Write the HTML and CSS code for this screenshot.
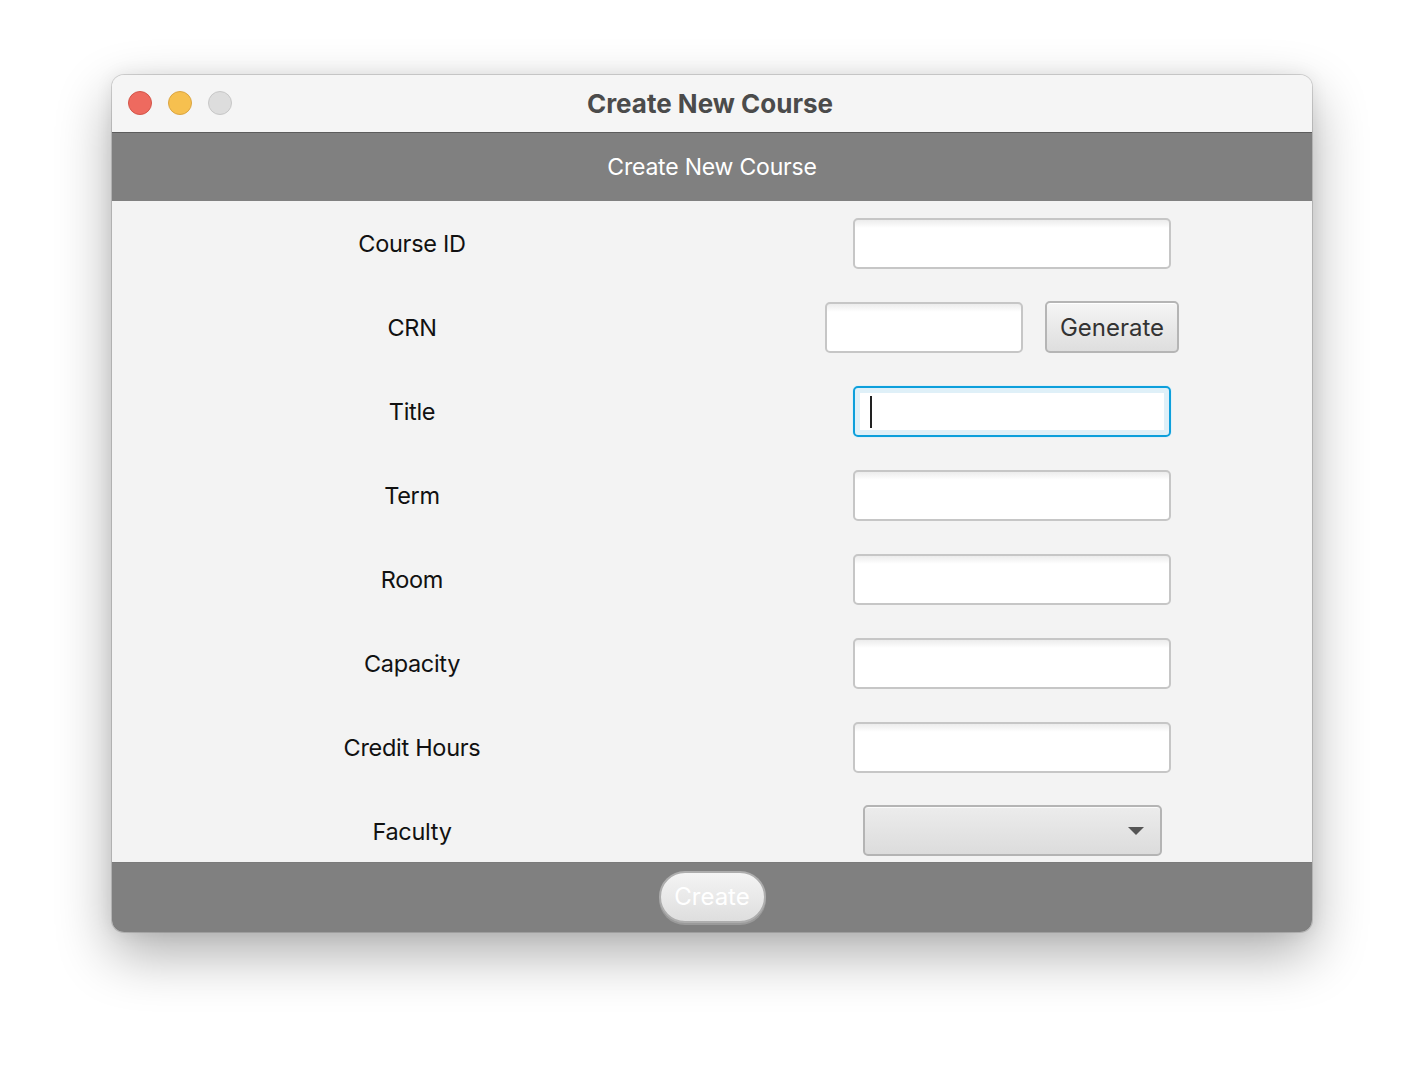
FILE: index.html
```html
<!DOCTYPE html>
<html>
<head>
<meta charset="utf-8">
<title>Create New Course</title>
<link rel="stylesheet" href="styles.css">
</head>
<body>
<div class="window">
  <div class="titlebar">
    <div class="lights">
      <span class="light red"></span>
      <span class="light yellow"></span>
      <span class="light gray"></span>
    </div>
    <div class="wtitle">Create New Course</div>
  </div>
  <div class="header">Create New Course</div>
  <div class="content">
    <div class="row"><div class="label">Course ID</div><div class="ctl"><div class="field"></div></div></div>
    <div class="row"><div class="label">CRN</div><div class="ctl crn"><div class="field small"></div><div class="btn">Generate</div></div></div>
    <div class="row"><div class="label">Title</div><div class="ctl"><div class="field focus"><span class="caret"></span></div></div></div>
    <div class="row"><div class="label">Term</div><div class="ctl"><div class="field"></div></div></div>
    <div class="row"><div class="label">Room</div><div class="ctl"><div class="field"></div></div></div>
    <div class="row"><div class="label">Capacity</div><div class="ctl"><div class="field"></div></div></div>
    <div class="row"><div class="label">Credit Hours</div><div class="ctl"><div class="field"></div></div></div>
    <div class="row"><div class="label">Faculty</div><div class="ctl"><div class="combo"><span class="arrow"></span></div></div></div>
  </div>
  <div class="footer"><div class="create">Create</div></div>
</div>
</body>
</html>
```
FILE: styles.css
```css
html, body { margin: 0; padding: 0; }
body {
  background: #ffffff;
  font-family: Inter, "Noto Sans", sans-serif;
  width: 1424px;
  height: 1080px;
  box-sizing: border-box;
  padding: 75px 112px 0 112px;
}
.window {
  width: 1200px;
  height: 857px;
  border-radius: 12px;
  overflow: hidden;
  display: flex;
  flex-direction: column;
  box-shadow: 0 0 0 1px rgba(0,0,0,0.14), 0 22px 55px rgba(0,0,0,0.32), 0 0 18px rgba(0,0,0,0.08);
  background: #f3f3f3;
}
.titlebar {
  height: 57px;
  flex: none;
  background: #f5f5f5;
  border-bottom: 1px solid #5c5c5c;
  position: relative;
  display: flex;
  align-items: center;
  justify-content: center;
}
.lights {
  position: absolute;
  left: 16px;
  top: 16px;
  display: flex;
  gap: 16px;
}
.light {
  width: 22px;
  height: 22px;
  border-radius: 50%;
  border: 1px solid;
  display: block;
}
.light.red { background: #ee6a5f; border-color: #d45549; }
.light.yellow { background: #f6c04f; border-color: #dba542; }
.light.gray { background: #dddddd; border-color: #c7c7c7; }
.wtitle {
  font-size: 26px;
  font-weight: 700;
  color: #4b4b4b;
  margin-top: 0;
  margin-left: -4px;
}
.header {
  height: 68px;
  flex: none;
  background: #808080;
  color: #ffffff;
  font-size: 23px;
  letter-spacing: -0.2px;
  display: flex;
  align-items: center;
  justify-content: center;
}
.content {
  height: 661px;
  flex: none;
  overflow: hidden;
  background: #f3f3f3;
}
.row {
  height: 84px;
  display: grid;
  grid-template-columns: 600px 600px;
  align-items: center;
}
.label {
  text-align: center;
  font-size: 23.5px;
  color: #111;
  letter-spacing: -0.3px;
}
.ctl {
  display: flex;
  justify-content: center;
  align-items: center;
}
.ctl.crn { gap: 22px; margin-left: -20px; }
.field {
  width: 318px;
  height: 51px;
  box-sizing: border-box;
  border: 2px solid #c6c6c6;
  border-radius: 5px;
  background: linear-gradient(#ececec 0px, #ffffff 8px, #ffffff 100%);
  position: relative;
}
.field.small { width: 198px; }
.field.focus {
  border-color: #0d9fdb;
  box-shadow: inset 0 0 0 5px #dff0f8, 0 0 0 1px #e2f1f8;
  background: #ffffff;
}
.caret {
  position: absolute;
  left: 15px;
  top: 8px;
  width: 2px;
  height: 32px;
  background: #222;
}
.btn {
  width: 134px;
  height: 52px;
  box-sizing: border-box;
  border: 2px solid #b5b5b5;
  border-radius: 5px;
  background: linear-gradient(#f5f5f5, #dedede);
  box-shadow: inset 0 1px 0 #ffffff;
  display: flex;
  align-items: center;
  justify-content: center;
  font-size: 24px;
  color: #333;
}
.combo {
  width: 299px;
  height: 51px;
  box-sizing: border-box;
  border: 2px solid #b4b4b4;
  border-radius: 5px;
  background: linear-gradient(#ececec, #dcdcdc);
  box-shadow: inset 0 1px 0 #fafafa;
  position: relative;
  margin-top: -2px;
}
.arrow {
  position: absolute;
  right: 16px;
  top: 20px;
  width: 0;
  height: 0;
  border-left: 8px solid transparent;
  border-right: 8px solid transparent;
  border-top: 8px solid #555;
}
.footer {
  flex: 1;
  background: #808080;
  border-top: 1px solid #7a7a7a;
  display: flex;
  align-items: center;
  justify-content: center;
}
.create {
  width: 107px;
  height: 52px;
  box-sizing: border-box;
  border: 2px solid #adadad;
  border-radius: 26px;
  background: linear-gradient(#f4f4f4, #dedede);
  box-shadow: 0 2px 0 #9a9a9a;
  color: #ffffff;
  font-size: 24px;
  display: flex;
  align-items: center;
  justify-content: center;
  margin-top: -2px;
}
```
